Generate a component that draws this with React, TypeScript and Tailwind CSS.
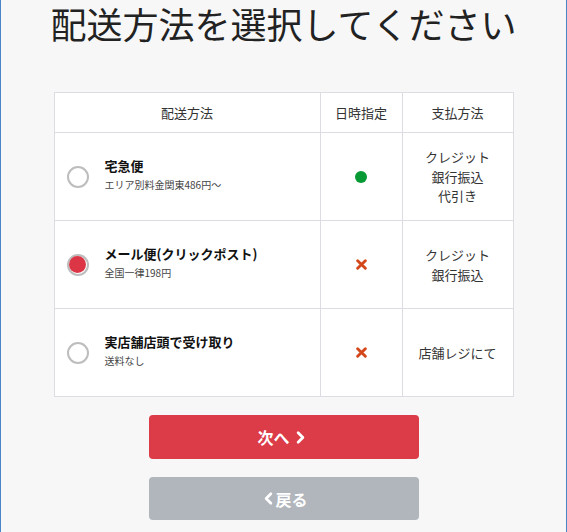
import { ChevronLeft, ChevronRight } from "lucide-react"

interface Method {
  id: string
  name: string
  note: string
  dateOk: boolean
  payments: string[]
  selected?: boolean
}

const methods: Method[] = [
  {
    id: "takkyubin",
    name: "宅急便",
    note: "エリア別料金関東486円〜",
    dateOk: true,
    payments: ["クレジット", "銀行振込", "代引き"],
  },
  {
    id: "clickpost",
    name: "メール便(クリックポスト)",
    note: "全国一律198円",
    dateOk: false,
    payments: ["クレジット", "銀行振込"],
    selected: true,
  },
  {
    id: "store",
    name: "実店舗店頭で受け取り",
    note: "送料なし",
    dateOk: false,
    payments: ["店舗レジにて"],
  },
]

function Radio({ checked }: { checked?: boolean }) {
  return (
    <span className="flex h-[22px] w-[22px] shrink-0 items-center justify-center rounded-full border-2 border-[#bdbdbd] bg-white">
      {checked && <span className="h-[17px] w-[17px] rounded-full bg-[#dc3545]" />}
    </span>
  )
}

function Cross() {
  return (
    <svg width="11" height="11" viewBox="0 0 10 10" className="mx-auto">
      <path d="M1.5 1.5 L8.5 8.5 M8.5 1.5 L1.5 8.5" stroke="#d4471b" strokeWidth="2.6" strokeLinecap="round" />
    </svg>
  )
}

export default function App() {
  return (
    <div
      className="min-h-[532px] w-full border-x border-[#4a86c5] bg-[#f7f7f7] text-[#222]"
      style={{ fontFamily: '"Noto Sans CJK JP", "Noto Sans", sans-serif' }}
    >
      <h1 className="text-center text-[36px] font-normal leading-[46px] text-[#222]">配送方法を選択してください</h1>

      <table className="mx-auto mt-[46px] w-[460px] border-collapse bg-white text-[13px] text-[#333]">
        <thead>
          <tr className="h-[40px]">
            <th className="w-[266px] border border-[#dcdde2] font-normal">配送方法</th>
            <th className="w-[82px] border border-[#dcdde2] font-normal">日時指定</th>
            <th className="border border-[#dcdde2] font-normal">支払方法</th>
          </tr>
        </thead>
        <tbody>
          {methods.map((m) => (
            <tr key={m.id} className="h-[88px]">
              <td className="border border-[#dcdde2] pl-[12px]">
                <div className="flex items-center gap-[16px]">
                  <Radio checked={m.selected} />
                  <div className="-mt-[6px]">
                    <p className="text-[13px] font-bold leading-[22px] text-[#111]">{m.name}</p>
                    <p className="text-[10px] leading-[16px] text-[#444]">{m.note}</p>
                  </div>
                </div>
              </td>
              <td className="border border-[#dcdde2] text-center">
                {m.dateOk ? (
                  <span className="mx-auto block h-[12px] w-[12px] rounded-full bg-[#079a34]" />
                ) : (
                  <Cross />
                )}
              </td>
              <td className="border border-[#dcdde2] text-center leading-[19.5px]">
                {m.payments.map((p) => (
                  <div key={p}>{p}</div>
                ))}
              </td>
            </tr>
          ))}
        </tbody>
      </table>

      <div className="mt-[18px] flex flex-col items-center gap-[18px]">
        <button className="flex h-[44px] w-[270px] items-center justify-center rounded-[4px] bg-[#dc3b48] text-[16px] font-bold text-white">
          次へ
          <ChevronRight className="ml-[1px] h-[19px] w-[19px]" strokeWidth={3.5} />
        </button>
        <button className="flex h-[43px] w-[270px] items-center justify-center rounded-[4px] bg-[#b1b5bc] text-[16px] font-bold text-white">
          <ChevronLeft className="-mr-[3px] h-[19px] w-[19px]" strokeWidth={3.5} />
          戻る
        </button>
      </div>
    </div>
  )
}
